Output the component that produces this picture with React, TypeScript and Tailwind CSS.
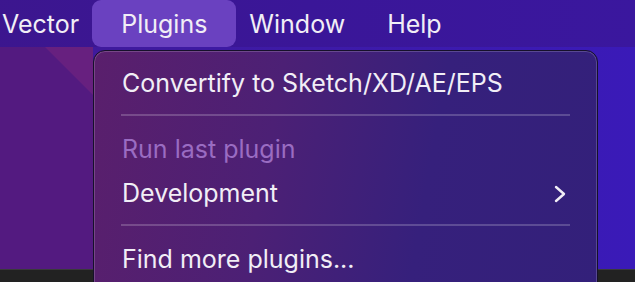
export default function App() {
    const items = ["Vector", "Plugins", "Window", "Help"];

    return (
        <div
            className="relative w-[635px] h-[282px] overflow-hidden bg-[#3a1ab4] text-[#f1eef6]"
            style={{ fontFamily: "Inter, 'Noto Sans', sans-serif" }}
        >
            {/* menu bar */}
            <div className="flex h-[47px] items-center bg-[linear-gradient(90deg,#3c168e,#3a1698_50%,#3a179e)] text-[25px] -ml-[19px]">
                {items.map((item) =>
                    item === "Plugins" ? (
                        <div
                            key={item}
                            className="h-[47px] flex items-center pt-[2px] px-[29px] -mx-[8px] rounded-[9px] bg-[#6a41c0]"
                        >
                            {item}
                        </div>
                    ) : (
                        <div key={item} className="px-[21px] pt-[2px]">
                            {item}
                        </div>
                    )
                )}
            </div>

            {/* desktop behind */}
            <div className="relative h-[222px] flex">
                <div className="relative w-[93px] bg-[#531a80]">
                    <svg
                        className="absolute left-0 top-0"
                        width="93"
                        height="60"
                        viewBox="0 0 93 60"
                    >
                        <polygon points="45,0 93,0 93,48" fill="#67207f" />
                    </svg>
                </div>
                <div className="flex-1 bg-[linear-gradient(90deg,#3f1a9c,#3a1ab8)]" />
            </div>
            <div className="absolute left-0 right-0 bottom-0 h-[13px] bg-[#222] border-t border-[#3a3a3a]" />

            {/* dropdown menu */}
            <div className="absolute left-[93px] top-[50px] w-[505px] h-[260px] rounded-[12px] border border-[#16102a] bg-[linear-gradient(100deg,#5a1f6c_0%,#4c2075_35%,#36207c_65%,#33207a_100%)] shadow-[inset_0_0_0_1px_rgba(255,255,255,0.18)] pt-[11px] text-[25px]">
                <div className="h-[44px] flex items-center px-[28px]">
                    Convertify to Sketch/XD/AE/EPS
                </div>
                <div className="mx-[27px] my-[8px] h-[2px] bg-[#ffffff]/20" />
                <div className="mt-[12px] h-[44px] flex items-center px-[28px] text-[#9a6cc2]">
                    Run last plugin
                </div>
                <div className="h-[44px] flex items-center justify-between px-[28px]">
                    <span>Development</span>
                    <svg width="12" height="18" viewBox="0 0 12 18" className="mr-[3px]">
                        <path
                            d="M2 2 L10 9 L2 16"
                            fill="none"
                            stroke="#f1eef6"
                            strokeWidth="2.4"
                            strokeLinecap="round"
                            strokeLinejoin="round"
                        />
                    </svg>
                </div>
                <div className="mx-[27px] my-[8px] h-[2px] bg-[#ffffff]/20" />
                <div className="mt-[12px] h-[44px] flex items-center px-[28px]">
                    Find more plugins...
                </div>
            </div>
        </div>
    );
}
